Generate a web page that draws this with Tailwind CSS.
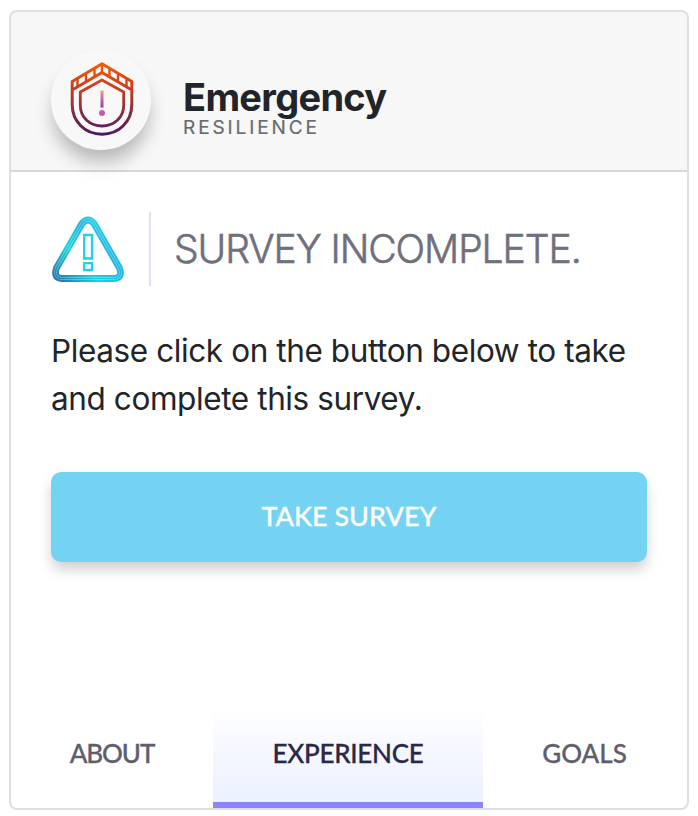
<!DOCTYPE html>
<html lang="en">
<head>
<meta charset="utf-8">
<title>Emergency Resilience</title>
<script src="https://cdn.jsdelivr.net/npm/@tailwindcss/browser@4"></script>
</head>
<body class="bg-white font-['Inter',sans-serif] text-[#212529]">
<main class="ml-[9px] mt-[10px] flex h-[800px] w-[680px] flex-col overflow-hidden rounded-lg border-2 border-[#dfdfdf] bg-white">
  <header class="flex h-40 shrink-0 border-b-2 border-[#d8d8d8] bg-[#f7f7f7] pl-10 pt-[38px]">
    <div class="size-[100px] shrink-0 rounded-full bg-[#f8f8f8] shadow-[0_14px_18px_-2px_rgba(0,0,0,0.26)]">
      <svg viewBox="0 0 100 100" class="size-full" fill="none">
        <defs>
          <linearGradient id="shield" gradientUnits="userSpaceOnUse" x1="0" y1="12" x2="0" y2="86"><stop stop-color="#ff5a00"/><stop offset=".3" stop-color="#d0421c"/><stop offset="1" stop-color="#4b1761"/></linearGradient>
          <linearGradient id="mark" gradientUnits="userSpaceOnUse" x1="0" y1="40" x2="0" y2="58"><stop stop-color="#f2a084"/><stop offset="1" stop-color="#9138a8"/></linearGradient>
        </defs>
        <g stroke="url(#shield)" stroke-width="3" stroke-linejoin="round">
          <path d="M51 13.800 80.800 31.500V54.500C80.800 71.500 68 84.200 51 84.200S21.200 71.500 21.200 54.500V31.500Z"/>
          <path d="M22 39.500 51 22.500 80 39.500"/>
          <path d="M51 14V22M43.500 18V27M35 23V32M26.500 28.500V37M58.500 18V27M67 23V32M75.500 28.500V37" stroke-width="2.400"/>
          <path d="M51 30 72.700 42V55.500C72.700 67.500 63 76 51 76S29.300 67.500 29.300 55.500V42Z" stroke-width="2.800"/>
        </g>
        <path d="M49.500 40.500H52.500V57.500H49.500Z" fill="url(#mark)"/>
        <circle cx="51" cy="63" r="3" fill="#bf5fab"/>
      </svg>
    </div>
    <div class="ml-8 pt-[27px]">
      <h1 class="h-[41px] whitespace-nowrap text-[38px] font-bold leading-[40px] tracking-[-0.7px]">Emergency</h1>
      <p class="whitespace-nowrap text-[19px] leading-[20px] tracking-[2.9px] text-[#686a6c] [-webkit-text-stroke:0.2px_#686a6c]">RESILIENCE</p>
    </div>
  </header>
  <section class="flex flex-1 flex-col px-10 pt-10">
    <div class="flex h-[74px] items-center">
      <svg viewBox="0 0 76 74" class="h-[74px] w-[76px]" fill="none">
        <defs><linearGradient id="alert" gradientUnits="userSpaceOnUse" x1="4" y1="68" x2="60" y2="18"><stop stop-color="#2870a6"/><stop offset=".42" stop-color="#18d4df"/><stop offset=".75" stop-color="#1fb4e2"/><stop offset="1" stop-color="#26d9e3"/></linearGradient></defs>
        <path d="M31 11.500Q37 4.500 43 11.500L68.500 56Q72 66 63 66.500H11Q2 66 5.500 56Z" stroke="url(#alert)" stroke-width="6.800" stroke-linejoin="round"/>
        <path d="M31 11.500Q37 4.500 43 11.500L68.500 56Q72 66 63 66.500H11Q2 66 5.500 56Z" stroke="#fff" stroke-opacity=".4" stroke-width="3"/>
        <path d="M31 11.500Q37 4.500 43 11.500L68.500 56Q72 66 63 66.500H11Q2 66 5.500 56Z" stroke="url(#alert)" stroke-width="1.500"/>
        <path d="M33.200 23H41V46.500H33.200ZM33.200 51.200H41V58H33.200Z" stroke="#20d3e2" stroke-width="2.300"/>
      </svg>
      <div class="ml-[22px] h-[74px] w-[2px] bg-[#dfe0ee]"></div>
      <h2 class="ml-[23px] whitespace-nowrap text-[39px] font-light leading-[50px] tracking-[-1.05px] text-[#6f6f7d] [-webkit-text-stroke:0.6px_#6f6f7d]">SURVEY INCOMPLETE.</h2>
    </div>
    <p class="mt-[41px] whitespace-nowrap text-[31.5px] leading-[48px] tracking-[-0.4px]">Please click on the button below to take<br>and complete this survey.</p>
    <button class="mt-[49px] h-[90px] w-[596px] rounded-[10px] bg-[#74d2f2] pb-[2px] font-['Lato',sans-serif] text-[27px] font-medium text-white shadow-[0_8px_14px_-1px_rgba(0,0,0,0.2)] [-webkit-text-stroke:0.3px_white]">TAKE SURVEY</button>
  </section>
  <nav class="flex h-[100px] shrink-0 font-['Lato',sans-serif] text-[26px] font-medium text-[#5f5d6e] [-webkit-text-stroke:0.3px]">
    <a class="flex w-[202px] items-center justify-center pb-[9px] tracking-[-1.1px]">ABOUT</a>
    <a class="flex w-[270px] items-center justify-center border-b-[6px] border-[#8c83ff] bg-linear-to-b from-white via-[#f5f7ff] to-[#ecf1ff] pb-[3px] tracking-[-0.3px] text-[#2b2846]">EXPERIENCE</a>
    <a class="flex w-[204px] items-center justify-center pb-[9px] pr-px">GOALS</a>
  </nav>
</main>
</body>
</html>
